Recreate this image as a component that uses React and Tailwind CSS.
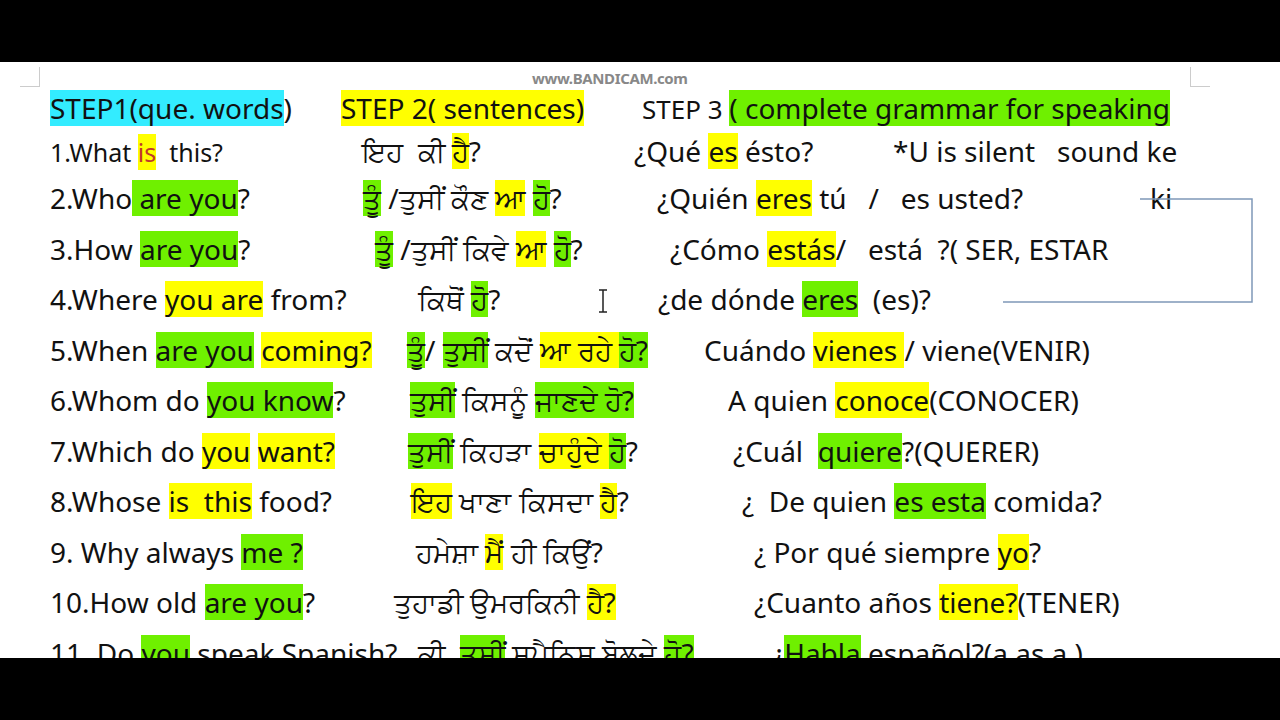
import React from "react";

const Y = "bg-[#ffff00]";
const G = "bg-[#6ff000]";
const C = "bg-[#33ecff]";

// each row: cells with fixed width so columns start where the page puts them
const rows = [
  {
    h: "h-[40px]",
    cells: [
      { w: "w-[291px]", s: [["STEP1(que. words", C], [")"]] },
      { w: "w-[301px]", s: [["STEP 2( sentences)", Y]] },
      { w: "", s: [["STEP 3 ", "", "text-[26px]"], ["( complete grammar for speaking", G]] },
    ],
  },
  {
    h: "h-[45px]",
    cells: [
      { w: "w-[312px]", s: [["1.What ", "", "text-[25px]"], ["is", Y, "text-[25px] text-[#c0392b]"], ["  this?", "", "text-[25px]"]] },
      { w: "w-[272px]", s: [["ਇਹ  ਕੀ "], ["ਹੈ", Y], ["?"]] },
      { w: "w-[259px]", s: [["¿Qué "], ["es", Y], [" ésto?"]] },
      { w: "", s: [["*U is silent   sound ke"]] },
    ],
  },
  {
    h: "h-[50.5px]",
    cells: [
      { w: "w-[313px]", s: [["2.Who"], [" are you", G], ["?"]] },
      { w: "w-[294px]", s: [["ਤੂੰ", G], [" /ਤੁਸੀਂ ਕੌਣ "], ["ਆ", Y], [" "], ["ਹੋ", G], ["?"]] },
      { w: "w-[493px]", s: [["¿Quién "], ["eres", Y], [" tú   /   es usted?"]] },
      { w: "", s: [["ki"]] },
    ],
  },
  {
    h: "h-[50.5px]",
    cells: [
      { w: "w-[325px]", s: [["3.How "], ["are you", G], ["?"]] },
      { w: "w-[295px]", s: [["ਤੂੰ", G], [" /ਤੁਸੀਂ ਕਿਵੇ "], ["ਆ", Y], [" "], ["ਹੋ", G], ["?"]] },
      { w: "", s: [["¿Cómo "], ["estás", Y], ["/   está  ?( SER, ESTAR"]] },
    ],
  },
  {
    h: "h-[50.5px]",
    cells: [
      { w: "w-[368px]", s: [["4.Where "], ["you are", Y], [" from?"]] },
      { w: "w-[240px]", s: [["ਕਿਥੋਂ "], ["ਹੋ", G], ["?"]] },
      { w: "", s: [["¿de dónde "], ["eres", G], ["  (es)?"]] },
    ],
  },
  {
    h: "h-[50.5px]",
    cells: [
      { w: "w-[357px]", s: [["5.When "], ["are you", G], [" "], ["coming?", Y]] },
      { w: "w-[297px]", s: [["ਤੂੰ", G], ["/ "], ["ਤੁਸੀਂ", G], [" ਕਦੋਂ "], ["ਆ ਰਹੇ ", Y], ["ਹੋ?", G]] },
      { w: "", s: [["Cuándo "], ["vienes ", Y], ["/ viene(VENIR)"]] },
    ],
  },
  {
    h: "h-[50.5px]",
    cells: [
      { w: "w-[360px]", s: [["6.Whom do "], ["you know", G], ["?"]] },
      { w: "w-[318px]", s: [["ਤੁਸੀਂ", G], [" ਕਿਸਨੂੰ "], ["ਜਾਣਦੇ ਹੋ?", G]] },
      { w: "", s: [["A quien "], ["conoce", Y], ["(CONOCER)"]] },
    ],
  },
  {
    h: "h-[50.5px]",
    cells: [
      { w: "w-[358px]", s: [["7.Which do "], ["you", Y], [" "], ["want?", Y]] },
      { w: "w-[325px]", s: [["ਤੁਸੀਂ", G], [" ਕਿਹੜਾ "], ["ਚਾਹੁੰਦੇ ", Y], ["ਹੋ", G], ["?"]] },
      { w: "", s: [["¿Cuál  "], ["quiere", G], ["?(QUERER)"]] },
    ],
  },
  {
    h: "h-[50.5px]",
    cells: [
      { w: "w-[361px]", s: [["8.Whose "], ["is  this", Y], [" food?"]] },
      { w: "w-[331px]", s: [["ਇਹ", Y], [" ਖਾਣਾ ਕਿਸਦਾ "], ["ਹੈ", Y], ["?"]] },
      { w: "", s: [["¿  De quien "], ["es esta", G], [" comida?"]] },
    ],
  },
  {
    h: "h-[50.5px]",
    cells: [
      { w: "w-[366px]", s: [["9. Why always "], ["me ?", G]] },
      { w: "w-[338px]", s: [["ਹਮੇਸ਼ਾ "], ["ਮੈਂ", Y], [" ਹੀ ਕਿਉਂ?"]] },
      { w: "", s: [["¿ Por qué siempre "], ["yo", Y], ["?"]] },
    ],
  },
  {
    h: "h-[50.5px]",
    cells: [
      { w: "w-[344px]", s: [["10.How old "], ["are you", G], ["?"]] },
      { w: "w-[360px]", s: [["ਤੁਹਾਡੀ ਉਮਰਕਿਨੀ "], ["ਹੈ?", Y]] },
      { w: "", s: [["¿Cuanto años "], ["tiene?", Y], ["(TENER)"]] },
    ],
  },
  {
    h: "h-[50.5px]",
    cells: [
      { w: "w-[368px]", s: [["11. Do "], ["you", G], [" speak Spanish?"]] },
      { w: "w-[354px]", s: [["ਕੀ  "], ["ਤੁਸੀਂ", G], [" ਸਪੈਨਿਸ਼ ਬੋਲਦੇ "], ["ਹੋ?", G]] },
      { w: "", s: [["¿"], ["Habla", G], [" español?(a as a )"]] },
    ],
  },
];

export default function App() {
  return (
    <div className="w-[1280px] h-[720px] bg-black flex flex-col overflow-hidden">
      <div className="h-[62px] shrink-0" />
      <div className="relative h-[596px] bg-white overflow-hidden font-['Liberation_Serif'] text-[28px] text-[#111]">
        {/* page corner marks */}
        <div className="absolute left-[20px] top-[5px] w-[20px] h-[20px] border-r border-b border-[#ccc]" />
        <div className="absolute left-[1190px] top-[5px] w-[20px] h-[20px] border-l border-b border-[#ccc]" />
        <div className="absolute left-[532px] top-[5px] font-['Liberation_Sans'] font-bold text-[15px] text-[#888] tracking-tight">
          www.BANDICAM.com
        </div>
        <svg className="absolute left-0 top-0" width="1280" height="596">
          <path d="M1140 137 H1252 V240 H1003" fill="none" stroke="#7f98b8" strokeWidth="1.5" />
          <path d="M599 228 h8 M603 228 v22 M599 250 h8" stroke="#222" strokeWidth="1.5" />
        </svg>
        <div className="flex flex-col pt-[26px] pl-[50px]">
          {rows.map((r, i) => (
            <div key={i} className={`flex items-center whitespace-pre ${r.h}`}>
              {r.cells.map((c, j) => (
                <div key={j} className={`shrink-0 ${c.w}`}>
                  {c.s.map(([t, bg, extra], k) => (
                    <span key={k} className={`inline-block leading-[36px] ${bg || ""} ${extra || ""}`}>
                      {t}
                    </span>
                  ))}
                </div>
              ))}
            </div>
          ))}
        </div>
      </div>
    </div>
  );
}
